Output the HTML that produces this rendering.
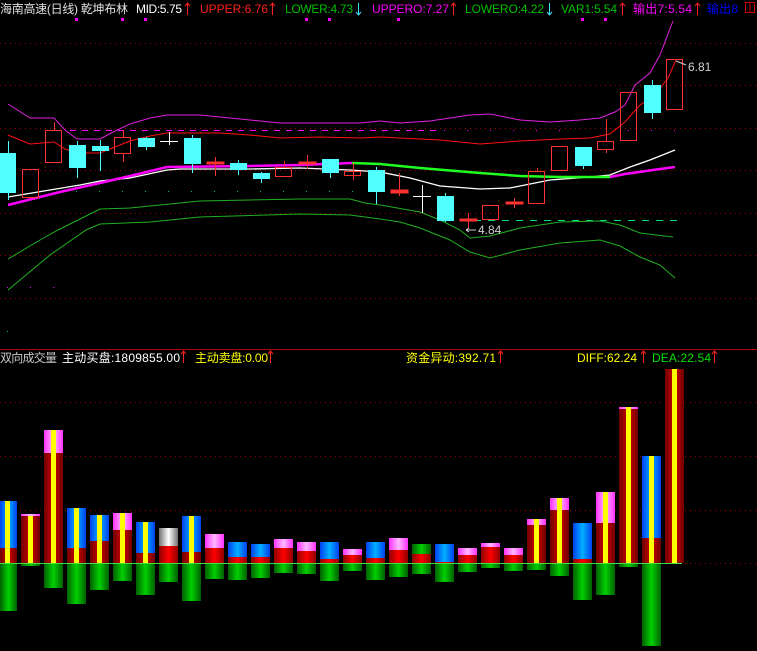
<!DOCTYPE html>
<html><head><meta charset="utf-8"><style>
html,body{margin:0;padding:0;background:#000;width:757px;height:651px;overflow:hidden}
svg{display:block}
text{font-family:"Liberation Sans","Noto Sans CJK SC",sans-serif;font-size:12px}
</style></head><body>
<svg width="757" height="651" viewBox="0 0 757 651" xmlns="http://www.w3.org/2000/svg">
<defs>
<linearGradient id="gb" x1="0" x2="1"><stop offset="0" stop-color="#0040f0"/><stop offset=".5" stop-color="#00b0ff"/><stop offset="1" stop-color="#0040f0"/></linearGradient>
<linearGradient id="gr" x1="0" x2="1"><stop offset="0" stop-color="#900000"/><stop offset=".5" stop-color="#ff0000"/><stop offset="1" stop-color="#900000"/></linearGradient>
<linearGradient id="gd" x1="0" x2="1"><stop offset="0" stop-color="#700000"/><stop offset=".5" stop-color="#d00000"/><stop offset="1" stop-color="#700000"/></linearGradient>
<linearGradient id="gp" x1="0" x2="1"><stop offset="0" stop-color="#ff30ff"/><stop offset=".5" stop-color="#ffb8ff"/><stop offset="1" stop-color="#ff30ff"/></linearGradient>
<linearGradient id="gg" x1="0" x2="1"><stop offset="0" stop-color="#006000"/><stop offset=".5" stop-color="#00d000"/><stop offset="1" stop-color="#006000"/></linearGradient>
<linearGradient id="gw" x1="0" x2="1"><stop offset="0" stop-color="#707070"/><stop offset=".5" stop-color="#ffffff"/><stop offset="1" stop-color="#707070"/></linearGradient>
</defs>

<g stroke="#a00000" stroke-width="1" stroke-dasharray="1,4">
<line x1="0" y1="43.5" x2="757" y2="43.5"/><line x1="0" y1="85.5" x2="757" y2="85.5"/>
<line x1="0" y1="128.5" x2="757" y2="128.5"/><line x1="0" y1="170.5" x2="757" y2="170.5"/>
<line x1="0" y1="213.5" x2="757" y2="213.5"/><line x1="0" y1="255.5" x2="757" y2="255.5"/>
<line x1="0" y1="298.5" x2="757" y2="298.5"/>
<line x1="0" y1="402.5" x2="757" y2="402.5"/><line x1="0" y1="456.5" x2="757" y2="456.5"/>
<line x1="0" y1="510.5" x2="757" y2="510.5"/><line x1="0" y1="563.5" x2="757" y2="563.5"/>
</g>
<line x1="0" y1="349.5" x2="757" y2="349.5" stroke="#b00000" stroke-width="1"/>

<text x="0" y="13" fill="#e0e0e0" textLength="128">海南高速(日线) 乾坤布林</text>
<text x="136" y="13" fill="#fff" textLength="46">MID:5.75</text>
<text x="200" y="13" fill="#ff2020" textLength="68">UPPER:6.76</text>
<text x="285" y="13" fill="#00c000" textLength="68">LOWER:4.73</text>
<text x="372" y="13" fill="#ff00ff" textLength="77">UPPERO:7.27</text>
<text x="465" y="13" fill="#00c000" textLength="79">LOWERO:4.22</text>
<text x="561" y="13" fill="#00c000" textLength="56">VAR1:5.54</text>
<text x="633" y="13" fill="#ff00ff" textLength="59">输出7:5.54</text>
<text x="707" y="13" fill="#0000ff" textLength="31">输出8</text>
<rect x="745.5" y="2.5" width="9" height="10" fill="none" stroke="#d00000"/><line x1="750" y1="3" x2="750" y2="12" stroke="#d00000"/>
<g stroke="#ff2020" stroke-width="1">
<path d="M187.5 15V3M185 6l2.5-3 2.5 3"/><path d="M272.5 15V3M270 6l2.5-3 2.5 3"/>
<path d="M453.5 15V3M451 6l2.5-3 2.5 3"/><path d="M622.5 15V3M620 6l2.5-3 2.5 3"/>
<path d="M697.5 15V3M695 6l2.5-3 2.5 3"/>
</g>
<g stroke="#40e0ff" stroke-width="1"><path d="M358.5 3V15M356 12l2.5 3 2.5-3"/><path d="M549.5 3V15M547 12l2.5 3 2.5-3"/></g>
<g fill="#ff00ff"><rect x="75" y="18" width="3" height="3"/><rect x="121" y="18" width="3" height="3"/><rect x="144" y="18" width="3" height="3"/><rect x="305" y="18" width="3" height="3"/><rect x="328" y="18" width="3" height="3"/><rect x="397" y="18" width="3" height="3"/><rect x="581" y="18" width="3" height="3"/><rect x="604" y="18" width="3" height="3"/></g>

<g fill="#00c060"><rect x="7" y="191" width="1" height="1"/><rect x="76" y="191" width="1" height="1"/><rect x="99" y="191" width="1" height="1"/><rect x="122" y="191" width="1" height="1"/><rect x="145" y="191" width="1" height="1"/><rect x="168" y="191" width="1" height="1"/><rect x="191" y="191" width="1" height="1"/><rect x="214" y="191" width="1" height="1"/><rect x="237" y="191" width="1" height="1"/><rect x="260" y="191" width="1" height="1"/><rect x="283" y="191" width="1" height="1"/><rect x="306" y="191" width="1" height="1"/><rect x="329" y="191" width="1" height="1"/><rect x="352" y="191" width="1" height="1"/><rect x="7" y="331" width="1" height="1"/></g>
<g fill="#ff00ff"><rect x="7" y="287" width="1" height="1"/><rect x="30" y="287" width="1" height="1"/><rect x="53" y="287" width="1" height="1"/></g>
<line x1="70" y1="130.5" x2="440" y2="130.5" stroke="#ff00ff" stroke-dasharray="6,6"/>
<g fill="#ff00ff"><rect x="444" y="130" width="1" height="1"/><rect x="467" y="130" width="1" height="1"/><rect x="490" y="130" width="1" height="1"/><rect x="513" y="130" width="1" height="1"/><rect x="536" y="130" width="1" height="1"/><rect x="559" y="130" width="1" height="1"/><rect x="628" y="130" width="1" height="1"/><rect x="651" y="130" width="1" height="1"/><rect x="674" y="130" width="1" height="1"/></g>
<line x1="460" y1="220.5" x2="680" y2="220.5" stroke="#00e080" stroke-dasharray="7,7"/>

<polyline fill="none" stroke="#e020e0" stroke-width="1" points="8,104 30,118 54,118 65,130 77,139 100,139 115,131 130,124 150,118 167,115 200,115 240,119 280,123 320,123 360,123 380,121 400,123 430,121 470,115 490,114 520,120 550,122 580,120 600,118 615,112 625,105 635,85 650,73 660,55 673,21"/>
<polyline fill="none" stroke="#ff1010" stroke-width="1" points="8,135 30,144 54,142 65,149 77,153 100,153 115,147 130,141 150,136 167,133 220,133 250,135 280,138 320,137 360,138 380,137 400,138 440,140 480,144 520,141 560,139 590,138 610,134 625,122 640,105 655,95 668,78 676,60"/>
<polyline fill="none" stroke="#20b020" stroke-width="1" points="8,259 40,240 58,230 100,209 130,208 200,201 250,200 300,199 350,199 365,203 380,205 420,212 440,220 460,230 470,238 490,236 520,228 560,222 600,221 620,225 640,233 673,237"/>
<polyline fill="none" stroke="#20b020" stroke-width="1" points="8,290 50,255 86,230 100,224 150,222 200,217 300,214 350,215 380,219 400,222 420,228 450,240 470,252 490,258 520,250 560,243 600,240 620,246 640,257 660,265 675,278"/>
<polyline fill="none" stroke="#ffffff" stroke-width="1.3" points="8,197 50,190 80,185 100,181 130,178 167,170 180,169 250,169 300,168 350,170 380,172 410,178 440,186 480,189 510,188 550,180 590,177 610,175 630,167 650,160 675,150"/>
<polyline fill="none" stroke="#ff00ff" stroke-width="2.5" points="8,205 60,192 100,183 130,176 167,167 250,166 300,165 352,163"/>
<polyline fill="none" stroke="#20ff20" stroke-width="2.5" points="352,163 380,164 420,168 480,173 520,176 560,177 610,177"/>
<polyline fill="none" stroke="#ff00ff" stroke-width="2.5" points="610,177 625,174 660,169 675,167"/>

<g fill="#50ffff" stroke="#50ffff">
<line x1="8.5" y1="141" x2="8.5" y2="200"/><rect x="0" y="153" width="16" height="40" stroke="none"/>
<line x1="77.5" y1="141" x2="77.5" y2="178"/><rect x="69" y="145" width="17" height="23" stroke="none"/>
<line x1="100.5" y1="140" x2="100.5" y2="171"/><rect x="92" y="146" width="17" height="5" stroke="none"/>
<line x1="146.5" y1="137" x2="146.5" y2="150"/><rect x="138" y="138" width="17" height="9" stroke="none"/>
<line x1="192.5" y1="135" x2="192.5" y2="173"/><rect x="184" y="138" width="17" height="26" stroke="none"/>
<line x1="238.5" y1="160" x2="238.5" y2="175"/><rect x="230" y="163" width="17" height="7" stroke="none"/>
<line x1="261.5" y1="172" x2="261.5" y2="183"/><rect x="253" y="173" width="17" height="6" stroke="none"/>
<line x1="330.5" y1="159" x2="330.5" y2="178"/><rect x="322" y="159" width="17" height="14" stroke="none"/>
<line x1="376.5" y1="167" x2="376.5" y2="204"/><rect x="368" y="170" width="17" height="22" stroke="none"/>
<line x1="445.5" y1="193" x2="445.5" y2="222"/><rect x="437" y="196" width="17" height="25" stroke="none"/>
<line x1="583.5" y1="147" x2="583.5" y2="169"/><rect x="575" y="147" width="17" height="19" stroke="none"/>
<line x1="652.5" y1="80" x2="652.5" y2="119"/><rect x="644" y="85" width="17" height="28" stroke="none"/>
</g>
<g fill="none" stroke="#ff3030" stroke-width="1">
<rect x="22.5" y="169.5" width="16" height="28"/>
<line x1="54.5" y1="122" x2="54.5" y2="130"/><rect x="45.5" y="130.5" width="16" height="32"/>
<line x1="123.5" y1="130" x2="123.5" y2="137"/><line x1="123.5" y1="153" x2="123.5" y2="162"/><rect x="114.5" y="137.5" width="16" height="16"/>
<line x1="215.5" y1="157" x2="215.5" y2="176"/><rect x="207" y="162" width="17" height="2" fill="#ff3030"/>
<line x1="284.5" y1="161" x2="284.5" y2="167"/><rect x="275.5" y="167.5" width="16" height="9"/>
<line x1="307.5" y1="155" x2="307.5" y2="169"/><rect x="299" y="162" width="17" height="2" fill="#ff3030"/>
<line x1="353.5" y1="163" x2="353.5" y2="180"/><rect x="344.5" y="171.5" width="16" height="4"/>
<line x1="399.5" y1="173" x2="399.5" y2="196"/><rect x="391" y="190" width="17" height="3" fill="#ff3030"/>
<line x1="468.5" y1="213" x2="468.5" y2="228"/><rect x="460" y="219" width="17" height="2" fill="#ff3030"/>
<rect x="482.5" y="205.5" width="16" height="14"/>
<line x1="514.5" y1="198" x2="514.5" y2="208"/><rect x="506" y="202" width="17" height="2" fill="#ff3030"/>
<line x1="537.5" y1="168" x2="537.5" y2="171"/><rect x="528.5" y="171.5" width="16" height="32"/>
<rect x="551.5" y="146.5" width="16" height="24"/>
<line x1="606.5" y1="119" x2="606.5" y2="141"/><line x1="606.5" y1="150" x2="606.5" y2="153"/><rect x="597.5" y="141.5" width="16" height="8"/>
<rect x="620.5" y="92.5" width="16" height="48"/>
<rect x="666.5" y="59.5" width="16" height="50"/>
</g>
<g stroke="#fff"><line x1="160" y1="141.5" x2="178" y2="141.5"/><line x1="169.5" y1="132" x2="169.5" y2="145"/><line x1="413" y1="196.5" x2="431" y2="196.5"/><line x1="422.5" y1="185" x2="422.5" y2="213"/></g>
<text x="688" y="71" fill="#d0d0d0" font-size="12">6.81</text>
<path d="M676 61l10 4" stroke="#d0d0d0"/>
<text x="478" y="234" fill="#d0d0d0" font-size="12">4.84</text>
<path d="M466 230h10M466 230l3-2M466 230l3 2" stroke="#d0d0d0" fill="none"/>

<text x="0" y="362" fill="#c8c8c8" textLength="57">双向成交量</text>
<text x="62" y="362" fill="#fff" textLength="118">主动买盘:1809855.00</text>
<text x="195" y="362" fill="#ffff00" textLength="73">主动卖盘:0.00</text>
<text x="406" y="362" fill="#ffff00" textLength="90">资金异动:392.71</text>
<text x="577" y="362" fill="#ffff00" textLength="60">DIFF:62.24</text>
<text x="652" y="362" fill="#00e000" textLength="59">DEA:22.54</text>
<g stroke="#ff2020"><path d="M183.5 363V351M181 354l2.5-3 2.5 3"/><path d="M270.5 363V351M268 354l2.5-3 2.5 3"/><path d="M500.5 363V351M498 354l2.5-3 2.5 3"/><path d="M643.5 363V351M641 354l2.5-3 2.5 3"/><path d="M714.5 363V351M712 354l2.5-3 2.5 3"/></g>

<g fill="url(#gg)">
<rect x="0" y="563" width="17" height="48"/><rect x="21" y="563" width="19" height="3"/><rect x="44" y="563" width="19" height="25"/><rect x="67" y="563" width="19" height="41"/><rect x="90" y="563" width="19" height="27"/><rect x="113" y="563" width="19" height="18"/><rect x="136" y="563" width="19" height="32"/><rect x="159" y="563" width="19" height="19"/><rect x="182" y="563" width="19" height="38"/><rect x="205" y="563" width="19" height="16"/><rect x="228" y="563" width="19" height="17"/><rect x="251" y="563" width="19" height="15"/><rect x="274" y="563" width="19" height="10"/><rect x="297" y="563" width="19" height="11"/><rect x="320" y="563" width="19" height="18"/><rect x="343" y="563" width="19" height="8"/><rect x="366" y="563" width="19" height="17"/><rect x="389" y="563" width="19" height="14"/><rect x="412" y="563" width="19" height="11"/><rect x="435" y="563" width="19" height="19"/><rect x="458" y="563" width="19" height="9"/><rect x="481" y="563" width="19" height="5"/><rect x="504" y="563" width="19" height="8"/><rect x="527" y="563" width="19" height="7"/><rect x="550" y="563" width="19" height="13"/><rect x="573" y="563" width="19" height="37"/><rect x="596" y="563" width="19" height="32"/><rect x="619" y="563" width="19" height="4"/><rect x="642" y="563" width="19" height="83"/>
</g>
<rect x="0" y="501" width="17" height="47" fill="url(#gb)"/><rect x="0" y="548" width="17" height="15" fill="url(#gd)"/>
<rect x="21" y="514" width="19" height="2" fill="url(#gp)"/><rect x="21" y="516" width="19" height="47" fill="url(#gd)"/>
<rect x="44" y="430" width="19" height="23" fill="url(#gp)"/><rect x="44" y="453" width="19" height="110" fill="url(#gd)"/>
<rect x="67" y="508" width="19" height="40" fill="url(#gb)"/><rect x="67" y="548" width="19" height="15" fill="url(#gd)"/>
<rect x="90" y="515" width="19" height="26" fill="url(#gb)"/><rect x="90" y="541" width="19" height="22" fill="url(#gd)"/>
<rect x="113" y="513" width="19" height="17" fill="url(#gp)"/><rect x="113" y="530" width="19" height="33" fill="url(#gd)"/>
<rect x="136" y="522" width="19" height="31" fill="url(#gb)"/><rect x="136" y="553" width="19" height="10" fill="url(#gd)"/>
<rect x="159" y="528" width="19" height="18" fill="url(#gw)"/><rect x="159" y="546" width="19" height="17" fill="url(#gr)"/>
<rect x="182" y="516" width="19" height="36" fill="url(#gb)"/><rect x="182" y="552" width="19" height="11" fill="url(#gd)"/>
<rect x="205" y="534" width="19" height="14" fill="url(#gp)"/><rect x="205" y="548" width="19" height="15" fill="url(#gr)"/>
<rect x="228" y="542" width="19" height="15" fill="url(#gb)"/><rect x="228" y="557" width="19" height="6" fill="url(#gr)"/>
<rect x="251" y="544" width="19" height="13" fill="url(#gb)"/><rect x="251" y="557" width="19" height="6" fill="url(#gr)"/>
<rect x="274" y="539" width="19" height="9" fill="url(#gp)"/><rect x="274" y="548" width="19" height="15" fill="url(#gr)"/>
<rect x="297" y="542" width="19" height="9" fill="url(#gp)"/><rect x="297" y="551" width="19" height="12" fill="url(#gr)"/>
<rect x="320" y="542" width="19" height="17" fill="url(#gb)"/><rect x="320" y="559" width="19" height="4" fill="url(#gr)"/>
<rect x="343" y="549" width="19" height="6" fill="url(#gp)"/><rect x="343" y="555" width="19" height="8" fill="url(#gr)"/>
<rect x="366" y="542" width="19" height="16" fill="url(#gb)"/><rect x="366" y="558" width="19" height="5" fill="url(#gr)"/>
<rect x="389" y="538" width="19" height="12" fill="url(#gp)"/><rect x="389" y="550" width="19" height="13" fill="url(#gr)"/>
<rect x="412" y="544" width="19" height="10" fill="url(#gg)"/><rect x="412" y="554" width="19" height="9" fill="url(#gr)"/>
<rect x="435" y="544" width="19" height="18" fill="url(#gb)"/><rect x="435" y="562" width="19" height="1" fill="url(#gr)"/>
<rect x="458" y="548" width="19" height="7" fill="url(#gp)"/><rect x="458" y="555" width="19" height="8" fill="url(#gr)"/>
<rect x="481" y="543" width="19" height="4" fill="url(#gp)"/><rect x="481" y="547" width="19" height="16" fill="url(#gr)"/>
<rect x="504" y="548" width="19" height="7" fill="url(#gp)"/><rect x="504" y="555" width="19" height="8" fill="url(#gr)"/>
<rect x="527" y="519" width="19" height="6" fill="url(#gp)"/><rect x="527" y="525" width="19" height="38" fill="url(#gd)"/>
<rect x="550" y="498" width="19" height="12" fill="url(#gp)"/><rect x="550" y="510" width="19" height="53" fill="url(#gd)"/>
<rect x="573" y="523" width="19" height="36" fill="url(#gb)"/><rect x="573" y="559" width="19" height="4" fill="url(#gr)"/>
<rect x="596" y="492" width="19" height="31" fill="url(#gp)"/><rect x="596" y="523" width="19" height="40" fill="url(#gd)"/>
<rect x="619" y="407" width="19" height="2" fill="url(#gp)"/><rect x="619" y="409" width="19" height="154" fill="url(#gd)"/>
<rect x="642" y="456" width="19" height="82" fill="url(#gb)"/><rect x="642" y="538" width="19" height="25" fill="url(#gd)"/>
<rect x="665" y="369" width="19" height="194" fill="url(#gd)"/>
<g fill="#ffff00">
<rect x="5" y="501" width="5" height="62"/><rect x="28" y="516" width="5" height="47"/><rect x="51" y="430" width="5" height="133"/><rect x="74" y="508" width="5" height="55"/><rect x="97" y="515" width="5" height="48"/><rect x="120" y="513" width="5" height="50"/><rect x="143" y="522" width="5" height="41"/><rect x="189" y="516" width="5" height="47"/><rect x="534" y="519" width="5" height="44"/><rect x="557" y="498" width="5" height="65"/><rect x="603" y="492" width="5" height="71"/><rect x="626" y="407" width="5" height="156"/><rect x="649" y="456" width="5" height="107"/><rect x="672" y="369" width="5" height="194"/>
</g>
<line x1="0" y1="563.5" x2="682" y2="563.5" stroke="#40e040" stroke-width="1"/>
</svg>
</body></html>
